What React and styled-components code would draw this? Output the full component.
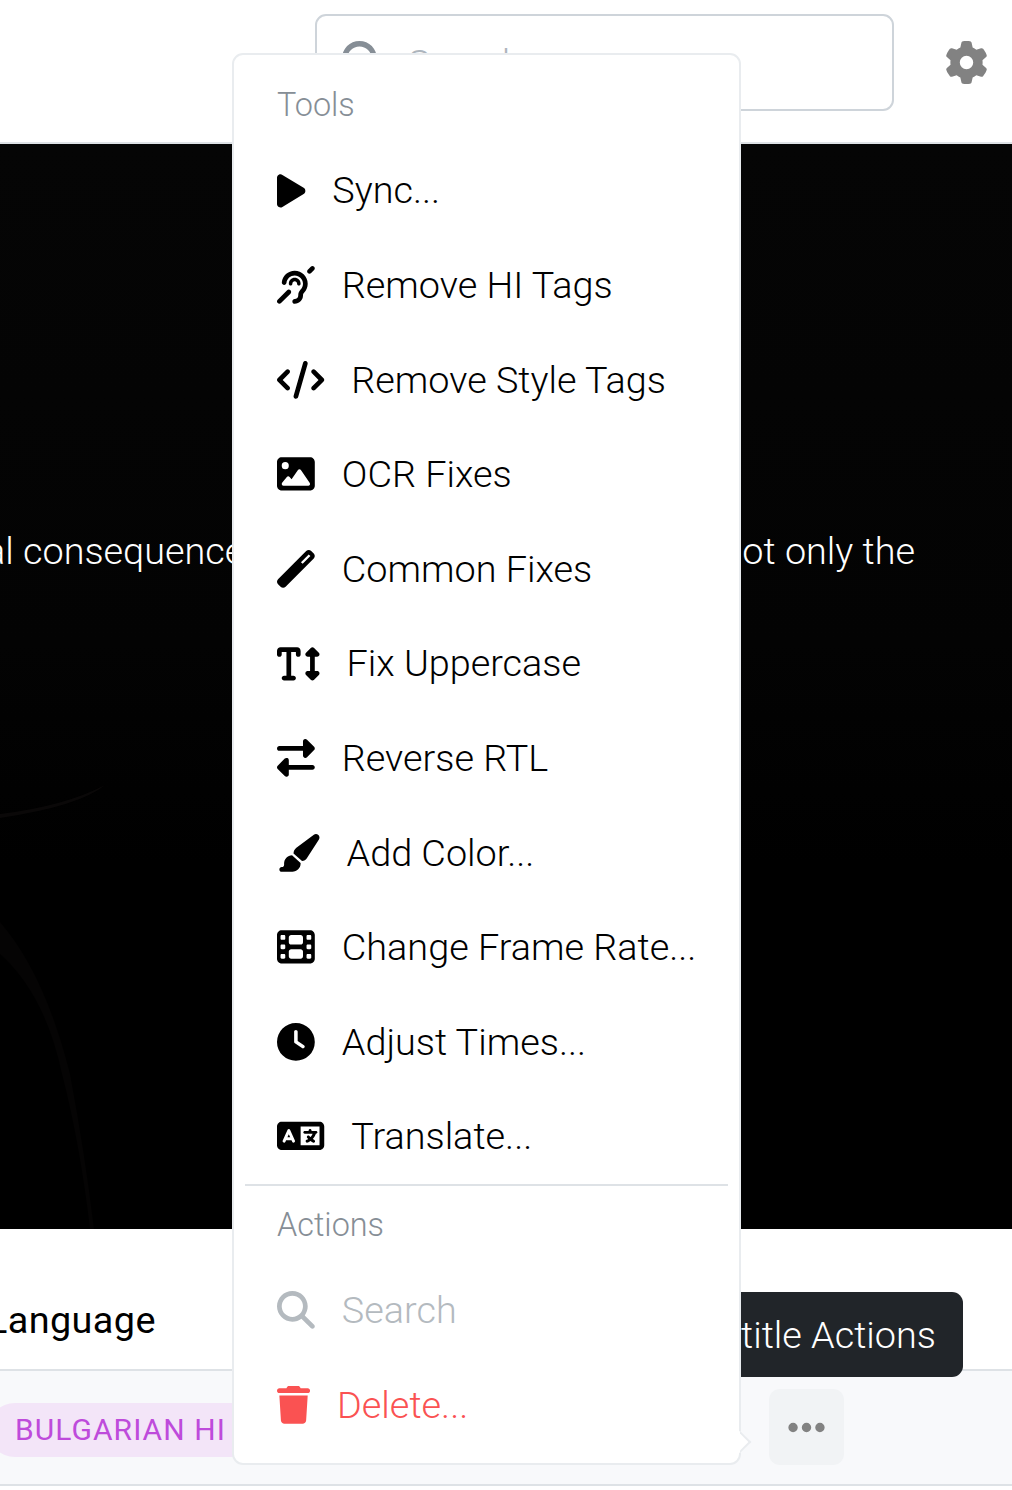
import React from "react";
import styled, { createGlobalStyle, css } from "styled-components";
import {
  FaClock,
  FaCode,
  FaEarDeaf,
  FaEllipsis,
  FaFilm,
  FaGear,
  FaImage,
  FaLanguage,
  FaMagnifyingGlass,
  FaPaintbrush,
  FaPlay,
  FaRightLeft,
  FaTextHeight,
  FaTrash,
  FaWandMagic
} from "react-icons/fa6";

const GlobalStyle = createGlobalStyle`
  * {
    box-sizing: border-box;
  }
  body {
    margin: 0;
    font-family: Roboto, sans-serif;
    font-size: 37.8px;
    font-weight: 300;
    color: #000;
    background-color: #fff;
  }
  svg {
    display: block;
    flex-shrink: 0;
  }
`;

const Container = styled.main`
  position: relative;
  display: flex;
  flex-direction: column;
  width: 1012px;
  height: 1490px;
  overflow: hidden;
`;

const Header = styled.header`
  display: flex;
  justify-content: flex-end;
  align-items: flex-start;
  height: 144px;
  padding: 14px 24px 0 0;
  border-bottom: 2px solid #dee2e6;
`;

const SearchBox = styled.div`
  display: flex;
  align-items: center;
  width: 579px;
  height: 97px;
  padding-left: 25px;
  border: 2px solid #ced4da;
  border-radius: 11px;
  color: #adb5bd;

  svg {
    width: 43px;
    height: 43px;
    margin-right: 23px;
    color: #868e96;
  }
`;

const SettingsButton = styled.div`
  display: flex;
  align-items: center;
  height: 97px;
  margin-left: 51px;
  color: #828282;

  svg {
    width: 43px;
    height: 43px;
  }
`;

const Video = styled.section`
  position: relative;
  height: 1085px;
  background: linear-gradient(#050505, #030303 500px, #000 720px);
`;

const Scene = styled.svg`
  width: 100%;
  height: 100%;
`;

const Caption = styled.div`
  position: absolute;
  top: 385px;
  left: -15px;
  right: 97px;
  display: flex;
  justify-content: space-between;
  line-height: 44px;
  white-space: nowrap;
  color: #fff;
`;

const TableHead = styled.div`
  display: flex;
  align-items: center;
  height: 142px;
  padding-top: 41px;
  border-bottom: 2px solid #dee2e6;
  font-weight: 400;
  letter-spacing: 0.4px;
`;

const HeadLabel = styled.span`
  margin-left: -13px;
`;

const TableRow = styled.div`
  display: flex;
  align-items: center;
  justify-content: space-between;
  height: 115px;
  padding-right: 168px;
  border-bottom: 2px solid #dee2e6;
  background-color: #f8f9fb;
`;

const Badge = styled.span`
  height: 54px;
  width: 270px;
  margin-left: -12px;
  margin-top: 4px;
  padding-left: 27px;
  border-radius: 27px;
  font-size: 30px;
  font-weight: 400;
  line-height: 54px;
  letter-spacing: 1.05px;
  color: #be4bdb;
  background-color: #f3e5f8;
`;

const MoreButton = styled.div`
  display: flex;
  align-items: center;
  justify-content: center;
  width: 75px;
  height: 76px;
  margin-bottom: 1px;
  padding-top: 1px;
  border-radius: 11px;
  color: #828282;
  background-color: #f1f3f5;

  svg {
    width: 43px;
    height: 43px;
  }
`;

const Tooltip = styled.div`
  position: absolute;
  top: 1292px;
  right: 49px;
  height: 85px;
  padding: 0 27px;
  border-radius: 11px;
  line-height: 86px;
  white-space: nowrap;
  color: #fff;
  background-color: #212529;
`;

const Menu = styled.div`
  position: absolute;
  top: 53px;
  left: 232px;
  width: 509px;
  height: 1412px;
  padding: 11px;
  border: 2px solid #e9ecef;
  border-radius: 11px;
  background-color: #fff;
`;

const MenuArrow = styled.div`
  position: absolute;
  right: -9px;
  bottom: 13px;
  width: 16px;
  height: 16px;
  border: 2px solid #e9ecef;
  border-left-color: transparent;
  border-bottom-color: transparent;
  background-color: #fff;
  transform: rotate(45deg);
`;

const MenuLabel = styled.div`
  height: 77.15px;
  padding-left: 32px;
  font-size: 32.4px;
  line-height: 78px;
  color: #868e96;
`;

const MenuItem = styled.div`
  display: flex;
  align-items: center;
  height: 94.6px;
  padding-left: 32px;
  white-space: nowrap;

  ${({ $disabled }) =>
    $disabled &&
    css`
      color: #b4babf;
    `}
  ${({ $danger }) =>
    $danger &&
    css`
      color: #fa5252;
    `}
`;

// the icons share one height, their widths differ
const MenuIcon = styled.span`
  width: ${({ $ratio }) => ($ratio || 1) * 37.8}px;
  margin-right: 27px;

  svg {
    width: 100%;
    height: 37.8px;
    overflow: visible;
  }
`;

const Divider = styled.div`
  height: 2px;
  background-color: #dee2e6;
`;

const tools = [
  { icon: FaPlay, ratio: 0.75, label: "Sync..." },
  { icon: FaEarDeaf, label: "Remove HI Tags" },
  { icon: FaCode, ratio: 1.25, label: "Remove Style Tags" },
  { icon: FaImage, label: "OCR Fixes" },
  { icon: FaWandMagic, label: "Common Fixes" },
  { icon: FaTextHeight, ratio: 1.125, label: "Fix Uppercase" },
  { icon: FaRightLeft, label: "Reverse RTL" },
  { icon: FaPaintbrush, ratio: 1.125, label: "Add Color..." },
  { icon: FaFilm, label: "Change Frame Rate..." },
  { icon: FaClock, label: "Adjust Times..." },
  { icon: FaLanguage, ratio: 1.25, label: "Translate..." }
];

export default () => {
  return (
    <>
      <GlobalStyle />
      <Container>
        <Header>
          <SearchBox>
            <FaMagnifyingGlass />
            Search
          </SearchBox>
          <SettingsButton>
            <FaGear />
          </SettingsButton>
        </Header>
        <Video>
          <Scene viewBox="0 0 1012 1085" fill="none">
            <path d="M0 670Q65 662 105 641Q80 662 0 674" fill="#0a0808" />
            <path d="M0 778Q45 830 70 930Q85 1010 94 1085L90 1085Q80 1000 62 930Q45 850 0 810" fill="#050404" />
          </Scene>
          <Caption>
            <span>al consequence</span>
            <span>not only the</span>
          </Caption>
        </Video>
        <TableHead>
          <HeadLabel>Language</HeadLabel>
        </TableHead>
        <TableRow>
          <Badge>BULGARIAN HI</Badge>
          <MoreButton>
            <FaEllipsis />
          </MoreButton>
        </TableRow>
        <Tooltip>Subtitle Actions</Tooltip>
        <Menu>
          <MenuLabel>Tools</MenuLabel>
          {tools.map(({ icon: Icon, ratio, label }) => (
            <MenuItem key={label}>
              <MenuIcon $ratio={ratio}>
                <Icon />
              </MenuIcon>
              {label}
            </MenuItem>
          ))}
          <Divider />
          <MenuLabel>Actions</MenuLabel>
          <MenuItem $disabled>
            <MenuIcon>
              <FaMagnifyingGlass />
            </MenuIcon>
            Search
          </MenuItem>
          <MenuItem $danger>
            <MenuIcon $ratio={0.875}>
              <FaTrash />
            </MenuIcon>
            Delete...
          </MenuItem>
          <MenuArrow />
        </Menu>
      </Container>
    </>
  );
};
